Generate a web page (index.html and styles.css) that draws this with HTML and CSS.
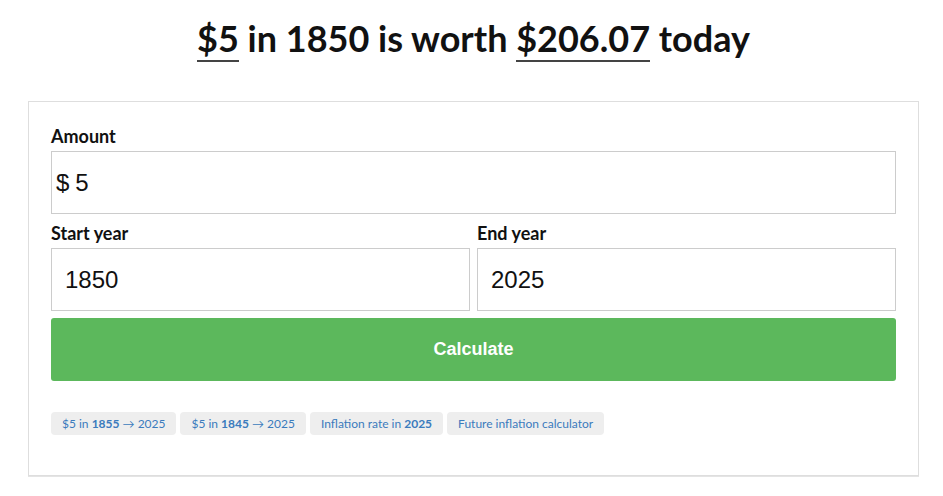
FILE: index.html
```html
<html>
<head>
    <meta charset="UTF-8">
    <meta name="viewport" content="width=device-width, initial-scale=1.0">
    <title>Inflation calculator</title>
    <link rel="stylesheet" href="styles.css">
</head>

<body>
    <h1 class="headline"><span class="amount">$5</span> in 1850 is worth <span class="amount">$206.07</span> today</h1>
    <div class="card">
        <form class="calc" onsubmit="return false">
            <label for="amount">Amount</label>
            <div class="field money">
                <span class="prefix">$</span>
                <input type="text" id="amount" value="5">
            </div>
            <div class="years">
                <div class="col">
                    <label for="start-year">Start year</label>
                    <div class="field">
                        <input type="text" id="start-year" value="1850">
                    </div>
                </div>
                <div class="col">
                    <label for="end-year">End year</label>
                    <div class="field">
                        <input type="text" id="end-year" value="2025">
                    </div>
                </div>
            </div>
            <button type="submit">Calculate</button>
        </form>
        <div class="links">
            <a href="#">$5 in <b>1855</b> &rarr; 2025</a>
            <a href="#">$5 in <b>1845</b> &rarr; 2025</a>
            <a href="#">Inflation rate in <b>2025</b></a>
            <a href="#">Future inflation calculator</a>
        </div>
    </div>
</body>
</html>
```

FILE: styles.css
```css
body {
    margin: 0;
    background: white;
    color: #111;
    font-family: Lato, 'Open Sans', sans-serif;
}
.headline {
    margin: 0;
    padding: 15px 0 0 4px;
    height: 85px;
    box-sizing: border-box;
    text-align: center;
    font-size: 36px;
    line-height: 46px;
    font-weight: 700;
}
.amount {
    border-bottom: 2px solid #444;
}
.card {
    margin: 16px 24px 0 28px;
    border: 1px solid #dedede;
    box-shadow: 0 1px 0 #e4e4e4;
    padding: 24px 22px 40px 22px;
    height: 375px;
    box-sizing: border-box;
}
label {
    display: block;
    font-size: 18px;
    font-weight: 700;
    line-height: 21px;
    margin-bottom: 4px;
}
.field {
    display: flex;
    align-items: center;
    height: 63px;
    box-sizing: border-box;
    border: 1px solid #cccccc;
    background: white;
}
.field input {
    flex: 1;
    border: 0;
    outline: none;
    height: 100%;
    padding: 0 13px;
    font-family: 'Liberation Sans', Arial, sans-serif;
    font-size: 24px;
    color: #111;
    background: transparent;
    min-width: 0;
}
.money .prefix {
    padding-left: 4px;
    font-family: 'Liberation Sans', Arial, sans-serif;
    font-size: 24px;
}
.money input {
    padding-left: 6px;
}
.years {
    display: flex;
    gap: 7px;
    margin-top: 9px;
}
.col {
    flex: 1;
}
button {
    display: block;
    width: 100%;
    height: 63px;
    margin-top: 7px;
    border: 0;
    border-radius: 3px;
    background: #5cb85c;
    color: white;
    font-family: 'Liberation Sans', Arial, sans-serif;
    font-size: 18px;
    font-weight: bold;
    cursor: pointer;
}
.links {
    display: flex;
    flex-wrap: wrap;
    gap: 4px;
    margin-top: 31px;
}
.links a {
    display: block;
    background: #eeeeee;
    color: #3b7bbd;
    border-radius: 4px;
    padding: 0 11px;
    font-size: 12px;
    line-height: 23px;
    text-decoration: none;
}
```
